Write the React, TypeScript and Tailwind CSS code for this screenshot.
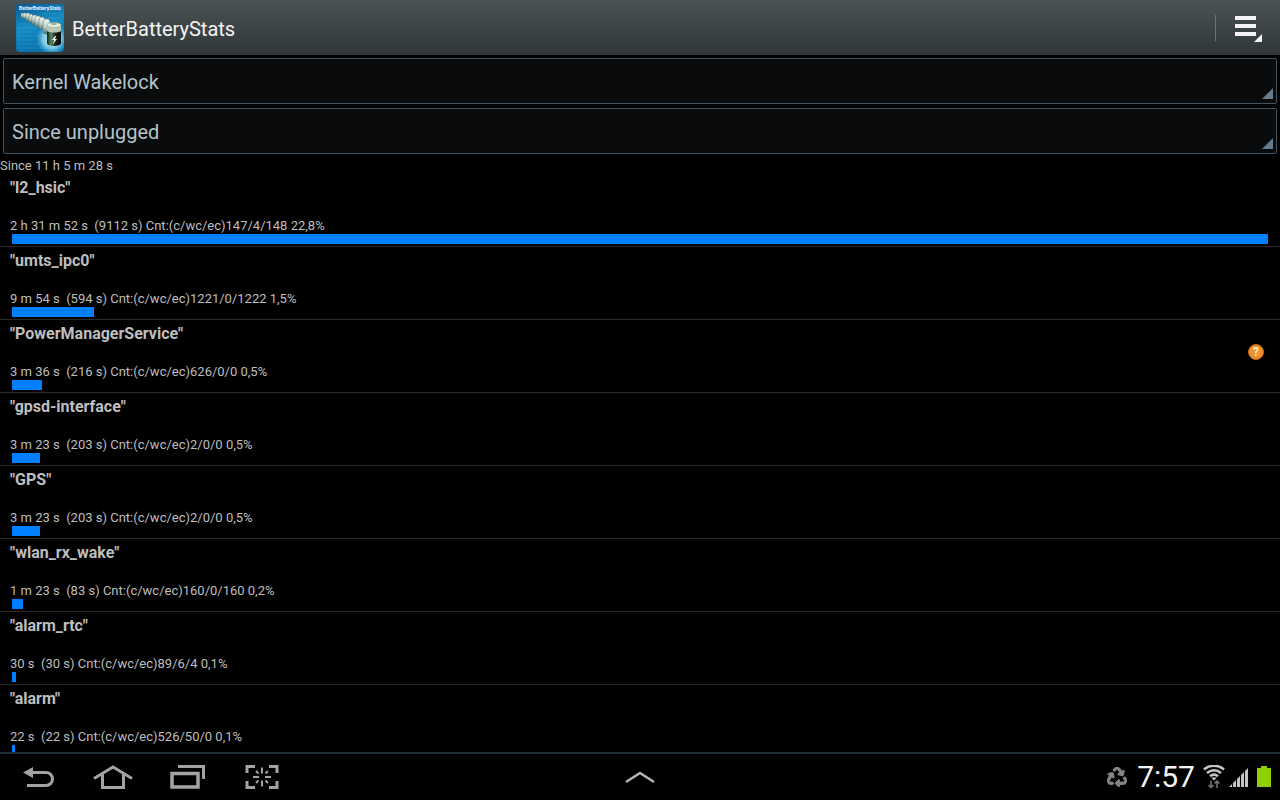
import { useState } from 'react';
import { FaRecycle } from 'react-icons/fa';

const wakelocks = [
  { name: 'l2_hsic', duration: '2 h 31 m 52 s', seconds: 9112, counts: '147/4/148', percent: '22,8%', help: false },
  { name: 'umts_ipc0', duration: '9 m 54 s', seconds: 594, counts: '1221/0/1222', percent: '1,5%', help: false },
  { name: 'PowerManagerService', duration: '3 m 36 s', seconds: 216, counts: '626/0/0', percent: '0,5%', help: true },
  { name: 'gpsd-interface', duration: '3 m 23 s', seconds: 203, counts: '2/0/0', percent: '0,5%', help: false },
  { name: 'GPS', duration: '3 m 23 s', seconds: 203, counts: '2/0/0', percent: '0,5%', help: false },
  { name: 'wlan_rx_wake', duration: '1 m 23 s', seconds: 83, counts: '160/0/160', percent: '0,2%', help: false },
  { name: 'alarm_rtc', duration: '30 s', seconds: 30, counts: '89/6/4', percent: '0,1%', help: false },
  { name: 'alarm', duration: '22 s', seconds: 22, counts: '526/50/0', percent: '0,1%', help: false },
];

const maxSeconds = Math.max(...wakelocks.map((w) => w.seconds));

function Spinner({ label, options }: { label: string; options: string[] }) {
  const [value, setValue] = useState(options[0]);

  return (
    <div className="relative">
      <select
        aria-label={label}
        value={value}
        onChange={(e) => setValue(e.target.value)}
        className="block h-[46px] w-full appearance-none rounded-xs border border-[#43535f] bg-[#0a0b0c] px-2 pt-[2px] text-xl text-[#b4c3c8] outline-none"
      >
        {options.map((option) => (
          <option key={option}>{option}</option>
        ))}
      </select>
      <svg className="pointer-events-none absolute right-1 bottom-[5px] size-[11px]" viewBox="0 0 10 10">
        <path d="M10 0v10H0z" fill="#667b8c" />
      </svg>
    </div>
  );
}

function AppLogo() {
  return (
    <svg className="size-12" viewBox="0 0 48 48" role="img" aria-label="BetterBatteryStats logo">
      <defs>
        <linearGradient id="logo-bg" x1="0" y1="0" x2="0.3" y2="1">
          <stop offset="0" stopColor="#075b96" />
          <stop offset="0.5" stopColor="#168bc4" />
          <stop offset="1" stopColor="#0871ac" />
        </linearGradient>
        <radialGradient id="logo-glow">
          <stop offset="0" stopColor="#e4fbff" stopOpacity="1" />
          <stop offset="0.6" stopColor="#a5e4f7" stopOpacity="0.7" />
          <stop offset="1" stopColor="#4dc0ea" stopOpacity="0" />
        </radialGradient>
        <linearGradient id="logo-cell" x1="0" y1="0" x2="1" y2="0">
          <stop offset="0" stopColor="#122018" />
          <stop offset="0.3" stopColor="#5c8a62" />
          <stop offset="0.6" stopColor="#17241b" />
          <stop offset="1" stopColor="#060a08" />
        </linearGradient>
        <linearGradient id="logo-trail" x1="0" y1="0" x2="0" y2="1">
          <stop offset="0" stopColor="#f2f8f2" />
          <stop offset="0.5" stopColor="#c3d4ca" />
          <stop offset="1" stopColor="#47706d" />
        </linearGradient>
      </defs>
      <rect width="48" height="48" rx="4" fill="url(#logo-bg)" />
      <g stroke="#5bbbe0" strokeWidth="1" strokeOpacity="0.45">
        <path d="M2 20h8M2 24h18M2 28h13M2 32h22M2 36h16M2 40h23M4 44h26" strokeDasharray="2 1 1 1" />
        <path d="M26 10h18M30 14h15M38 18h8" strokeDasharray="1 1 2 1" />
      </g>
      <ellipse cx="36" cy="35" rx="16" ry="16" fill="url(#logo-glow)" />
      <g fill="url(#logo-trail)" stroke="#50716f" strokeWidth="0.5">
        <rect x="5" y="9" width="3" height="5" rx="1" />
        <rect x="7" y="9" width="4" height="6" rx="1.5" />
        <rect x="10" y="9" width="4" height="8" rx="1.5" />
        <rect x="13" y="10" width="4" height="9" rx="2" />
        <rect x="16" y="11" width="5" height="10" rx="2" />
        <rect x="19" y="12" width="6" height="11" rx="2.500" />
        <rect x="23" y="13" width="6" height="13" rx="3" />
        <rect x="27" y="15" width="7" height="15" rx="3" />
      </g>
      <path d="M31 21v18c0 4 14 4 14 0V21z" fill="url(#logo-cell)" />
      <path d="M31 21v6c3 2 11 2 14 0v-6z" fill="#b9c8b5" />
      <ellipse cx="38" cy="21" rx="7" ry="2.500" fill="#e9f0e4" stroke="#8a9b88" strokeWidth="0.5" />
      <ellipse cx="38" cy="20" rx="3" ry="1.200" fill="#a3b09f" />
      <path d="m39 32-3 4h2l-1 4 4-5h-2l1-3z" fill="#f4fff4" />
      <text x="24" y="6" textAnchor="middle" fontSize="5" fontWeight="700" fill="#e6f7ff">
        BetterBatteryStats
      </text>
    </svg>
  );
}

function BackIcon() {
  return (
    <svg width="34" height="24" viewBox="0 0 34 24" fill="none">
      <path d="M9 7.500h15a6.500 6.500 0 0 1 0 13H5" stroke="#a3a3a3" strokeWidth="3" />
      <path d="M1 7.500 11 2v11z" fill="#a3a3a3" />
    </svg>
  );
}

function HomeIcon() {
  return (
    <svg width="40" height="26" viewBox="0 0 40 26" fill="none" stroke="#a3a3a3" strokeWidth="3">
      <path d="M1 14.500 20 3l19 11.500" />
      <path d="M9.500 10v13.500h21V10" />
    </svg>
  );
}

function RecentsIcon() {
  return (
    <svg width="38" height="26" viewBox="0 0 38 26" fill="none" stroke="#a3a3a3" strokeWidth="3">
      <path d="M2 9.500h26v13.500H2z" strokeWidth="3.500" />
      <path d="M8 2.500h25.500V15" />
    </svg>
  );
}

function ScreenshotIcon() {
  return (
    <svg width="34" height="26" viewBox="0 0 34 26" fill="none" stroke="#a3a3a3">
      <path d="M2 9V2.500h8M24 2.500h8V9M32 17v6.500h-8M10 23.500H2V17" strokeWidth="3" />
      <path d="M17 3.500v6M17 16.500v6M8 13h6M20 13h6M11 7l2.500 2.500M23 7l-2.500 2.500M11 19l2.500-2.500M23 19l-2.500-2.500" strokeWidth="2" />
    </svg>
  );
}

function WifiIcon() {
  return (
    <svg width="22" height="24" viewBox="0 0 22 24" fill="none">
      <path d="M1 4.500c6-5 14-5 20 0M4 8c4.500-3.500 9.500-3.500 14 0M7 11.300c2.500-2 5.500-2 8 0" stroke="#c4c4c4" strokeWidth="2.600" />
      <path d="M8.500 13c1.500-1 3.500-1 5 0L11 15.500z" fill="#c4c4c4" />
      <path d="M8 15.500v7M5.500 20 8 22.500l2.500-2.500M14 23v-7M11.500 18.500l2.500-2.500 2.500 2.500" stroke="#777777" strokeWidth="1.500" />
    </svg>
  );
}

function SignalIcon() {
  return (
    <svg width="20" height="20" viewBox="0 0 20 20" fill="#c4c4c4">
      <path d="M0 20 3 17v3zM4 20v-4l3-3v7zM8 20v-8l3-3v11zM12 20V8l3-3v15zM16 20V4l3-3v19z" />
    </svg>
  );
}

function BatteryIcon() {
  return (
    <svg width="14" height="22" viewBox="0 0 14 22">
      <path d="M0 2h4V0h6v2h4v19H0z" fill="#8fce00" />
    </svg>
  );
}

export default function App() {
  return (
    <div className="flex h-screen flex-col overflow-hidden bg-black font-[Roboto,sans-serif] text-[#bebebe]">
      {/* Action bar */}
      <header className="flex h-14 shrink-0 items-center justify-between border-b border-black bg-linear-to-b from-[#4a5355] to-[#303638] px-4">
        <div className="flex items-center gap-2">
          <AppLogo />
          <h1 className="pt-[2px] text-xl text-[#f3f3f3]">BetterBatteryStats</h1>
        </div>
        <div className="flex items-center gap-4">
          <span className="h-[26px] w-px bg-[#6b7375]" />
          <button aria-label="Menu">
            <svg width="32" height="28" viewBox="0 0 32 28" fill="#f3f3f3">
              <path d="M3 2h21v4H3zM3 10h21v4H3zM3 18h21v4H3zM30 20v8h-8z" />
            </svg>
          </button>
        </div>
      </header>

      <main className="flex min-h-0 flex-1 flex-col overflow-hidden">
        <div className="flex flex-col gap-1 px-[3px] pt-[2px] pb-1">
          <Spinner
            label="Statistic"
            options={['Kernel Wakelock', 'Partial Wakelock', 'Alarm', 'Process', 'Other']}
          />
          <Spinner
            label="Reference"
            options={['Since unplugged', 'Since charged', 'Since boot']}
          />
        </div>
        <p className="text-[13px] leading-4">Since 11 h 5 m 28 s</p>

        {/* Wakelock list */}
        <ul>
          {wakelocks.map((w) => (
            <li key={w.name} className="border-b border-[#2b2b2b] pt-1 pb-[2px]">
              <div className="flex items-center justify-between pr-4 pl-[10px]">
                <div className="flex flex-col gap-5">
                  <h2 className="text-base leading-5 font-bold">"{w.name}"</h2>
                  <p className="text-[13px] leading-4 whitespace-pre">
                    {`${w.duration}  (${w.seconds} s) Cnt:(c/wc/ec)${w.counts} ${w.percent}`}
                  </p>
                </div>
                {w.help && (
                  <button
                    aria-label={`About ${w.name}`}
                    className="flex size-4 items-center justify-center rounded-full border border-[#c96a1c] bg-[#ee8f31] text-xs font-bold text-[#fff0b0]"
                  >
                    ?
                  </button>
                )}
              </div>
              <div className="px-3">
                <div className="h-[10px] bg-[#0080ff]" style={{ width: `${(w.seconds / maxSeconds) * 100}%` }} />
              </div>
            </li>
          ))}
        </ul>
      </main>

      {/* System bar */}
      <footer className="grid h-12 shrink-0 grid-cols-3 items-center border-t-2 border-[#1c2c33] bg-black">
        <nav className="flex items-center gap-[37px] pl-[22px]">
          <button aria-label="Back"><BackIcon /></button>
          <button aria-label="Home"><HomeIcon /></button>
          <button aria-label="Recent apps"><RecentsIcon /></button>
          <button aria-label="Screenshot"><ScreenshotIcon /></button>
        </nav>
        <button aria-label="Show mini apps" className="justify-self-center">
          <svg width="30" height="14" viewBox="0 0 30 14" fill="none" stroke="#b4b4b4" strokeWidth="2.500">
            <path d="M1 12 15 3l14 9" />
          </svg>
        </button>
        <div className="flex items-center justify-end gap-2 pr-[9px]">
          <FaRecycle size={20} color="#858585" stroke="#858585" strokeWidth={24} />
          <time className="pl-[2px] text-3xl text-[#f3f3f3]">7:57</time>
          <div className="flex items-center gap-1">
            <WifiIcon />
            <SignalIcon />
          </div>
          <BatteryIcon />
        </div>
      </footer>
    </div>
  );
}
